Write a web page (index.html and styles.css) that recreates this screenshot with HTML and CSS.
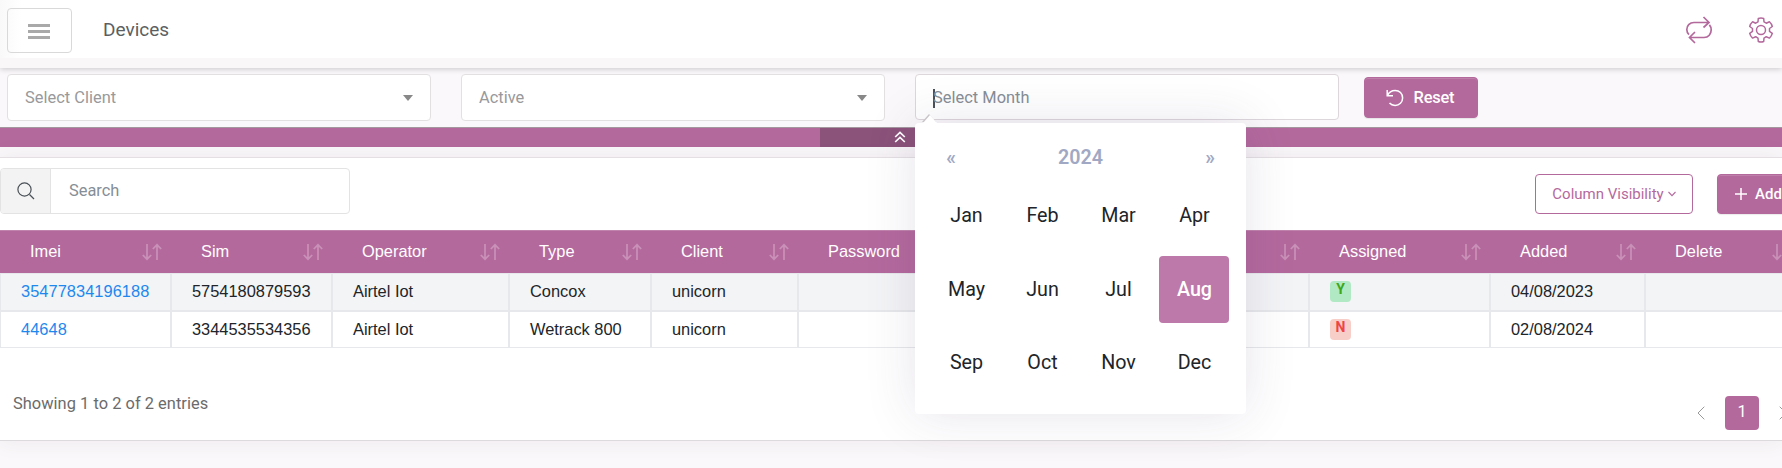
FILE: index.html
```html
<!DOCTYPE html>
<html lang="en">
<head>
<meta charset="utf-8">
<title>Devices</title>
<link rel="stylesheet" href="styles.css">
</head>
<body>
<svg class="defs" width="0" height="0">
  <symbol id="sort" viewBox="0 0 20 18"><path d="M5 1v15M.8 12 5 16.2 9.2 12M15 17V2M10.8 6 15 1.8 19.2 6" fill="none" stroke="currentColor" stroke-width="1.7"/></symbol>
</svg>
<header class="topbar">
  <button class="toggle" aria-label="Menu"><span></span><span></span><span></span></button>
  <h1 class="title">Devices</h1>
  <nav class="actions">
    <svg width="28" height="28" viewBox="0 0 28 28"><path d="M24 6.500H9C4.500 6.500 1.800 9.800 1.800 13.500c0 2.200.8 3.800 2.200 5.100M18.500 1l5.500 5.500-5.500 5M4.500 21.500h14.500c4.500 0 7.200-3.500 7.200-7.700 0-2-.7-3.600-1.800-4.900M10 27l-5.500-5.500L10 16" fill="none" stroke="currentColor" stroke-width="1.700"/></svg>
    <svg width="26" height="26" viewBox="0 0 26 26"><g fill="none" stroke="currentColor" stroke-width="1.500" stroke-linejoin="round"><path d="M10.300 1.500q2.700-1 5.400 0l.3 3.400 2.300 1.300 3.100-1.400q2.200 1.900 2.900 4.700l-2.800 2v2.900l2.800 2q-.7 2.800-2.900 4.700l-3.100-1.400-2.300 1.400-.3 3.400q-2.700 1-5.400 0l-.3-3.400-2.300-1.400-3.100 1.400q-2.200-1.900-2.900-4.700l2.800-2v-2.900l-2.800-2q.7-2.800 2.900-4.700l3.100 1.400 2.300-1.300z"/><circle cx="13" cy="13" r="4.500"/></g></svg>
  </nav>
</header>

<section class="filters">
  <div class="field select"><span>Select Client</span><i class="caret"></i></div>
  <div class="field select"><span>Active</span><i class="caret"></i></div>
  <div class="field month"><b class="cursor"></b><span>Select Month</span>
    <div class="picker">
      <div class="picker-head"><span class="nav">«</span><span>2024</span><span class="nav">»</span></div>
      <div class="months">
        <span>Jan</span><span>Feb</span><span>Mar</span><span>Apr</span>
        <span>May</span><span>Jun</span><span>Jul</span><span class="on">Aug</span>
        <span>Sep</span><span>Oct</span><span>Nov</span><span>Dec</span>
      </div>
    </div>
  </div>
  <button class="btn reset"><svg width="18" height="18" viewBox="0 0 18 18"><path d="M1.200 1v5.800H7M1.500 6.500C3 3 6 1.400 9.200 1.400c4.300 0 7.400 3.300 7.400 7.500s-3.200 7.500-7.500 7.500c-2.200 0-4.200-.8-5.600-2.400" fill="none" stroke="currentColor" stroke-width="1.500"/></svg>Reset</button>
</section>
<div class="collapse"><div class="collapse-tab"><svg width="12" height="12" viewBox="0 0 12 12"><path d="M1.200 6 6 1.400 10.800 6M1.200 11 6 6.400 10.800 11" fill="none" stroke="currentColor" stroke-width="1.700"/></svg></div></div>

<main class="card">
  <div class="tools">
    <div class="search"><span class="addon"><svg width="18" height="18" viewBox="0 0 18 18"><path d="M12.500 12.500 17 17" stroke="currentColor" stroke-width="1.300"/><circle cx="7.500" cy="7.500" r="6.600" fill="none" stroke="currentColor" stroke-width="1.200"/></svg></span><span class="search-input">Search</span></div>
    <button class="btn outline">Column Visibility<svg width="8" height="6" viewBox="0 0 8 6"><path d="M.5 1 4 4.600 7.500 1" fill="none" stroke="currentColor" stroke-width="1.100"/></svg></button>
    <button class="btn add"><svg width="12" height="12" viewBox="0 0 12 12"><path d="M6 0v12M0 6h12" stroke="currentColor" stroke-width="1.500"/></svg>Add</button>
  </div>
  <table class="grid">
    <colgroup><col class="c1"><col class="c2"><col class="c3"><col class="c4"><col class="c5"><col class="c6"><col class="c7"><col class="c8"><col class="c9"><col class="c10"></colgroup>
    <thead><tr>
      <th><div>Imei<svg><use href="#sort"/></svg></div></th>
      <th><div>Sim<svg><use href="#sort"/></svg></div></th>
      <th><div>Operator<svg><use href="#sort"/></svg></div></th>
      <th><div>Type<svg><use href="#sort"/></svg></div></th>
      <th><div>Client<svg><use href="#sort"/></svg></div></th>
      <th><div>Password<svg><use href="#sort"/></svg></div></th>
      <th><div class="end"><svg><use href="#sort"/></svg></div></th>
      <th><div>Assigned<svg><use href="#sort"/></svg></div></th>
      <th><div>Added<svg><use href="#sort"/></svg></div></th>
      <th><div>Delete<svg><use href="#sort"/></svg></div></th>
    </tr></thead>
    <tbody>
      <tr><td><a>35477834196188</a></td><td>5754180879593</td><td>Airtel Iot</td><td>Concox</td><td>unicorn</td><td></td><td></td><td><span class="tag yes">Y</span></td><td>04/08/2023</td><td></td></tr>
      <tr><td><a>44648</a></td><td>3344535534356</td><td>Airtel Iot</td><td>Wetrack 800</td><td>unicorn</td><td></td><td></td><td><span class="tag no">N</span></td><td>02/08/2024</td><td></td></tr>
    </tbody>
  </table>
  <footer class="foot">
    <span class="info">Showing 1 to 2 of 2 entries</span>
    <div class="pager">
      <svg width="8" height="14" viewBox="0 0 8 14"><path d="M7.300.7 1 7l6.300 6.300" fill="none" stroke="currentColor"/></svg>
      <span class="page">1</span>
      <svg width="8" height="14" viewBox="0 0 8 14"><path d="M.7.7 7 7 .7 13.300" fill="none" stroke="currentColor"/></svg>
    </div>
  </footer>
</main>
</body>
</html>
```
FILE: styles.css
```css
* { box-sizing: border-box; }
body { margin: 0; width: 1782px; height: 468px; overflow: hidden; background: #faf8fa; font: 16.4px/1.5 Roboto, sans-serif; color: #6c757d; }
button { font: inherit; }
.defs { display: block; height: 0; }

.topbar { display: flex; align-items: flex-start; height: 68px; padding: 8px 7px 0; background: linear-gradient(90deg, #f9f9f9, rgba(255,255,255,0) 22px) 0 0/100% 58px no-repeat, linear-gradient(#fff 58px, #faf7f9 58px); box-shadow: 0 1px 6px rgba(0,0,0,.2); }
.toggle { display: flex; flex-direction: column; align-items: flex-start; justify-content: center; gap: 3px; width: 65px; height: 45px; border: 1px solid #d9d9d9; border-radius: 4px; background: transparent; padding: 2px 0 0 20px; }
.toggle span { width: 22px; height: 3px; background: #a9a9a9; }
.title { margin: 8px 0 0 31px; font-size: 19px; font-weight: 400; color: #5c5f62; }
.actions { display: flex; align-items: center; gap: 35px; margin: 8px 1px 0 auto; color: #b4699d; }
.actions svg { display: block; }

.filters { display: flex; align-items: flex-start; gap: 30px; height: 60px; padding: 6px 7px 0; border-bottom: 1px solid #a3989e; }
.field { position: relative; display: flex; align-items: center; width: 424px; height: 47px; padding: 1px 17px 0; border: 1px solid #e3e0e2; border-radius: 4px; background: #fff; color: #98999b; letter-spacing: .03px; }
.field.month { height: 46px; padding-top: 2px; border-color: #ddd6db; color: #868e96; }
.caret { margin-left: auto; border: 5px solid transparent; border-top: 6px solid #888; border-bottom: 0; }
.cursor { width: 2px; height: 19px; margin-right: -2px; background: #495057; }
.btn { display: flex; align-items: center; justify-content: center; border: 1px solid #b4699d; border-radius: 4px; background: #b4699d; color: #fff; font-weight: 500; padding: 0; box-shadow: inset 0 1px 0 rgba(255,255,255,.15), 0 1px 1px rgba(0,0,0,.08); }
.reset { width: 114px; height: 41px; margin: 3px 0 0 -5px; padding: 1px 2px 0 0; gap: 10px; letter-spacing: -.2px; }
.collapse { height: 19px; padding-left: 820px; background: #b4699d; }
.collapse-tab { display: flex; align-items: center; justify-content: center; width: 160px; height: 19px; padding-bottom: 2px; background: #8b527a; color: #fff; }

.picker { position: absolute; z-index: 5; left: -1px; top: 48px; width: 331px; height: 291px; padding: 13px 13px 0; border-radius: 4px; background: #fff; box-shadow: 0 0 50px rgba(82,63,105,.15); color: #212529; letter-spacing: 0; }
.picker::before { content: ""; position: absolute; left: 8px; top: -8px; border: 7px solid transparent; border-top: 0; border-bottom: 8px solid #fff; filter: drop-shadow(-1px -1px 0 #c7c3c7); }
.picker-head { display: grid; grid-template-columns: 46px 1fr 46px; align-items: center; height: 44px; text-align: center; font-size: 19.7px; font-weight: 600; color: #a1a8c3; }
.months { display: grid; grid-template-columns: repeat(4, 70px); column-gap: 6px; row-gap: 6px; margin: 3px 0 0 3px; font-size: 19.7px; }
.months span { display: flex; align-items: center; justify-content: center; height: 67px; padding-left: 1px; border-radius: 4px; }
.months span:nth-child(-n+4) { padding-bottom: 2px; }
.months .on { background: #bd79a9; color: #fff; font-weight: 500; }

.card { height: 284px; margin-top: 10px; border-top: 1px solid #e3dfe2; border-bottom: 1px solid #dcdadc; background: #fff; box-shadow: 0 0 20px rgba(90,50,80,.08); }
.tools { display: flex; height: 72px; padding-top: 10px; width: 1830px; }
.search { display: flex; width: 350px; height: 46px; border: 1px solid #e3e3e3; border-radius: 4px; overflow: hidden; color: #868e96; }
.addon { display: flex; align-items: center; justify-content: center; width: 50px; border-right: 1px solid #e3e3e3; background: #f3f3f3; color: #495057; }
.search-input { padding: 10px 18px; }
.outline { width: 158px; height: 40px; margin: 6px 0 0 1185px; gap: 4px; background: #fff; color: #b4699d; font-size: 15px; font-weight: 400; box-shadow: none; }
.add { width: 90px; height: 40px; margin: 6px 0 0 24px; padding-left: 17px; justify-content: flex-start; gap: 8px; font-size: 15px; }

.grid { width: 1801px; table-layout: fixed; border-collapse: separate; border-spacing: 0; font: 16.4px/24px "Liberation Sans", Arial, sans-serif; color: #212529; }
.c1 { width: 171px; } .c2 { width: 161px; } .c3 { width: 177px; } .c4 { width: 142px; } .c5 { width: 147px; }
.c6 { width: 170px; } .c7 { width: 341px; } .c8 { width: 181px; } .c9 { width: 155px; } .c10 { width: 156px; }
th { height: 43px; padding: 0 9px 2px 30px; background: #b4699d; border-top: 1px solid #c083ad; color: #fff; font-weight: 400; text-align: left; }
th div { display: flex; align-items: center; justify-content: space-between; }
th .end { justify-content: flex-end; }
th svg { width: 20px; height: 18px; margin-top: 2px; color: #c991b8; }
td { height: 38px; padding: 0 20px; border: 1px solid #e6e8eb; }
tbody tr:first-child td { background: #f3f4f6; height: 38px; padding-bottom: 2px; }
tbody tr:last-child td { height: 37px; padding-bottom: 2px; }
td a { color: #1e88ee; letter-spacing: .05px; }
.tag { display: flex; justify-content: center; width: 21px; height: 21px; margin-top: 1px; border-radius: 4px; font: 700 14px/17px Roboto, sans-serif; }
.yes { background: #b1e9c5; color: #3fa61a; }
.no { background: #f8cfc8; color: #ee4444; }

.foot { display: flex; justify-content: space-between; width: 1787px; padding: 43px 0 0 13px; }
.info { margin-top: 1px; color: #6b6b6b; letter-spacing: .04px; }
.pager { display: flex; align-items: center; gap: 20px; height: 34px; margin: 5px 0 0; color: #999; }
.page { width: 34px; height: 34px; border-radius: 4px; background: #b4699d; color: #fff; text-align: center; line-height: 32px; }
```
